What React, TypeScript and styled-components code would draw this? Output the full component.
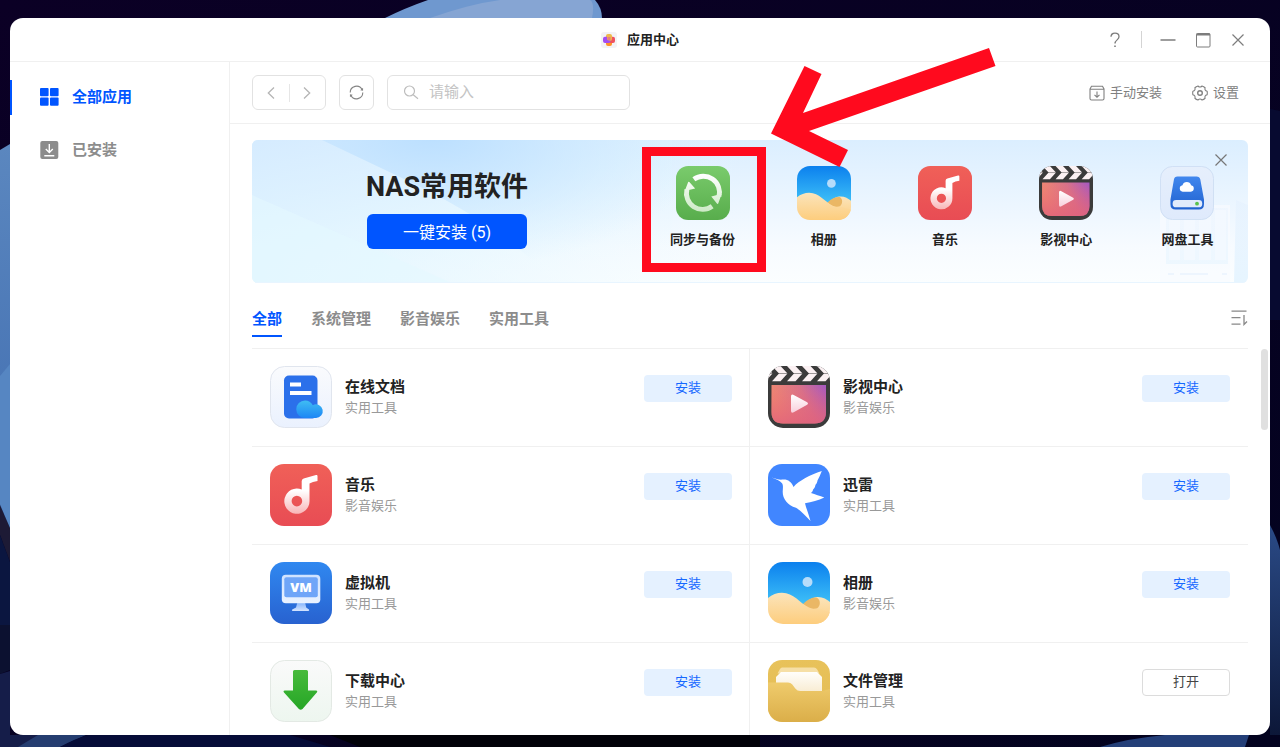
import React, { useId } from "react";
import styled, { createGlobalStyle, css } from "styled-components";

const color = {
  blue: "#0055ff",
  text: "#222222",
  muted: "#8c8c8c",
  line: "#f0f0f0",
  control: "#e2e2e2",
  mark: "#ff0a1e",
};

const GlobalStyle = createGlobalStyle`
  *, *::before, *::after { box-sizing: border-box; }
  body {
    margin: 0;
    background: #070022;
    color: ${color.text};
    font-family: Roboto, "Noto Sans CJK SC", sans-serif;
    font-size: 13px;
  }
  button, input { font: inherit; color: inherit; }
  button { border: 0; padding: 0; background: none; cursor: pointer; }
  svg { display: block; flex: none; }
  h1, h2, h3, p, ul { margin: 0; padding: 0; }
  ul { list-style: none; }
`;

const Desktop = styled.div`
  position: relative;
  height: 100vh;
  padding: 18px 10px 12px;
`;

const WallpaperSvg = styled.svg`
  position: absolute;
  inset: 0;
  width: 100%;
  height: 100%;
`;

const Window = styled.section`
  position: relative;
  display: flex;
  flex-direction: column;
  height: 100%;
  background: #fff;
  border-radius: 13px;
  overflow: hidden;
`;

const TitleBar = styled.header`
  display: grid;
  grid-template-columns: 1fr auto 1fr;
  align-items: center;
  flex: none;
  height: 44px;
  padding: 0 24px;
  border-bottom: 1px solid ${color.line};
`;

const WindowTitle = styled.h1`
  grid-column: 2;
  display: flex;
  align-items: center;
  gap: 10px;
  font-size: 13px;
  line-height: 20px;
`;

const WindowControls = styled.div`
  display: flex;
  align-items: center;
  justify-content: flex-end;
  color: #7d7d7d;
`;

const ControlButton = styled.button`
  display: grid;
  place-items: center;
  width: 16px;
  height: 20px;
  & + & { margin-left: 19px; }
`;

const ControlDivider = styled.span`
  width: 1px;
  height: 17px;
  margin: 0 18px;
  background: #d4d4d4;
`;

const Body = styled.div`
  display: flex;
  flex: 1;
  min-height: 0;
`;

const Sidebar = styled.nav`
  flex: none;
  display: flex;
  flex-direction: column;
  gap: 18px;
  width: 220px;
  padding-top: 18px;
  border-right: 1px solid ${color.line};
`;

const SideLink = styled.a<{ $active?: boolean }>`
  display: flex;
  align-items: center;
  gap: 13px;
  height: 35px;
  padding: 0 0 2px 28px;
  border-left: 2px solid ${(p) => (p.$active ? color.blue : "transparent")};
  color: ${(p) => (p.$active ? color.blue : color.muted)};
  font-size: 15px;
  font-weight: 700;
  line-height: 20px;
  text-decoration: none;
`;

const Main = styled.main`
  flex: 1;
  min-width: 0;
  display: flex;
  flex-direction: column;
`;

const Toolbar = styled.div`
  flex: none;
  display: flex;
  align-items: center;
  gap: 13px;
  height: 62px;
  padding: 0 31px 0 22px;
  border-bottom: 1px solid ${color.line};
`;

const boxed = css`
  height: 35px;
  border: 1px solid ${color.control};
  border-radius: 6px;
`;

const NavGroup = styled.div`
  ${boxed}
  display: flex;
  align-items: center;
  width: 74px;
`;

const NavButton = styled.button`
  flex: 1;
  display: grid;
  place-items: center;
  height: 18px;
  color: #b5b5b5;
  & + & { border-left: 1px solid #e6e6e6; }
`;

const RefreshButton = styled.button`
  ${boxed}
  display: grid;
  place-items: center;
  width: 35px;
  color: #858585;
`;

const SearchBox = styled.label`
  ${boxed}
  display: flex;
  align-items: center;
  gap: 10px;
  width: 243px;
  padding: 0 15px;
  color: #bdbdbd;
`;

const SearchInput = styled.input`
  flex: 1;
  min-width: 0;
  padding: 0 0 2px;
  border: 0;
  outline: 0;
  background: none;
  font-size: 15px;
  color: ${color.text};
  &::placeholder { color: #c4c4c4; }
`;

const ToolbarActions = styled.div`
  display: flex;
  gap: 30px;
  margin-left: auto;
`;

const ActionButton = styled.button`
  display: flex;
  align-items: center;
  gap: 5px;
  color: #808080;
  line-height: 20px;
`;

const Banner = styled.section`
  position: relative;
  flex: none;
  display: flex;
  height: 143px;
  margin: 16px 22px 0;
`;

const BannerArt = styled.svg`
  position: absolute;
  inset: 0;
  width: 100%;
  height: 100%;
  border-radius: 6px;
`;

const BannerLead = styled.div`
  position: relative;
  flex: 0 0 390px;
  display: flex;
  flex-direction: column;
  align-items: center;
  gap: 8px;
  padding-top: 28px;
`;

const BannerTitle = styled.h2`
  font-size: 27px;
  line-height: 38px;
`;

const InstallAllButton = styled.button`
  width: 160px;
  height: 35px;
  padding-bottom: 2px;
  border-radius: 6px;
  background: ${color.blue};
  color: #fff;
  font-size: 16px;
`;

const BannerApps = styled.ul`
  position: relative;
  flex: 1;
  display: grid;
  grid-template-columns: repeat(5, 1fr);
`;

const BannerApp = styled.li`
  position: relative;
  display: flex;
  flex-direction: column;
  align-items: center;
  gap: 10px;
  padding-top: 26px;
  font-weight: 700;
  line-height: 20px;
`;

const BannerClose = styled.button`
  position: absolute;
  top: 12px;
  right: 19px;
  display: grid;
  place-items: center;
  width: 16px;
  height: 16px;
  color: #777;
`;

const MarkFrame = styled.span`
  position: absolute;
  z-index: 2;
  top: 7px;
  left: 0;
  width: 124px;
  height: 125px;
  border: 9px solid ${color.mark};
`;

const MarkArrow = styled.svg`
  position: absolute;
  z-index: 3;
  top: -92px;
  left: 129px;
`;

const TabRow = styled.div`
  flex: none;
  display: flex;
  align-items: center;
  height: 66px;
  margin: 0 22px;
  padding-top: 4px;
  border-bottom: 1px solid ${color.line};
`;

const Tabs = styled.div`
  flex: 1;
  display: flex;
  gap: 29px;
`;

const Tab = styled.button<{ $active?: boolean }>`
  height: 38px;
  padding-top: 4px;
  border-bottom: 2px solid ${(p) => (p.$active ? color.blue : "transparent")};
  color: ${(p) => (p.$active ? color.blue : color.muted)};
  font-size: 15px;
  font-weight: 700;
  line-height: 24px;
`;

const SortButton = styled.button`
  color: #888;
`;

const ListArea = styled.div`
  flex: 1;
  min-height: 0;
  display: flex;
  padding-left: 22px;
`;

const AppGrid = styled.ul`
  flex: 1;
  display: grid;
  grid-template-columns: 1fr 1fr;
  grid-auto-rows: 98px;
  overflow: hidden;
`;

const AppCell = styled.li`
  display: flex;
  align-items: flex-start;
  gap: 13px;
  padding: 17px 18px;
  border-bottom: 1px solid ${color.line};
  &:nth-child(odd) {
    padding-right: 17px;
    border-right: 1px solid ${color.line};
  }
`;

const AppText = styled.div`
  flex: 1;
  padding-top: 10px;
`;

const AppName = styled.h3`
  font-size: 15px;
  line-height: 22px;
`;

const AppKind = styled.p`
  color: #999;
  font-size: 13px;
  line-height: 20px;
`;

const AppButton = styled.button<{ $open?: boolean }>`
  width: 88px;
  height: 27px;
  margin-top: 9px;
  padding-bottom: 2px;
  border-radius: 4px;
  line-height: 20px;
  ${(p) =>
    p.$open
      ? css`
          border: 1px solid #dcdcdc;
          background: #fff;
          color: #444;
        `
      : css`
          background: #e5f1ff;
          color: #1668ff;
        `}
`;

const ScrollTrack = styled.div`
  flex: none;
  display: flex;
  justify-content: flex-end;
  width: 22px;
  padding-right: 2px;
`;

const ScrollThumb = styled.div`
  width: 7px;
  height: 81px;
  border-radius: 4px;
  background: #e0e0e0;
`;

type AppId = "docs" | "movie" | "music" | "xunlei" | "vm" | "photos" | "download" | "files" | "sync" | "drive";

function AppIcon({ id, size }: { id: AppId; size: number }) {
  const uid = useId().replace(/[^a-zA-Z0-9]/g, "");
  const g = (n: string) => `${n}${uid}`;
  const url = (n: string) => `url(#${g(n)})`;
  const grad = (n: string, a: string, b: string) => (
    <linearGradient id={g(n)} x1="0" y1="0" x2="0" y2="1">
      <stop offset="0" stopColor={a} />
      <stop offset="1" stopColor={b} />
    </linearGradient>
  );
  const clip = (
    <clipPath id={g("c")}>
      <rect width="62" height="62" rx="15" />
    </clipPath>
  );
  const tile = <rect width="62" height="62" rx="14" fill={url("a")} />;
  const paleTile = (stroke: string) => (
    <rect x="0.5" y="0.5" width="61" height="61" rx="14" fill={url("a")} stroke={stroke} />
  );

  const art: Record<AppId, React.ReactNode> = {
    docs: (
      <>
        <defs>
          {grad("a", "#fafbfd", "#eaf1fe")}
          {grad("b", "#3fbdf3", "#1d86f5")}
        </defs>
        {paleTile("#e0e5ee")}
        <rect x="14" y="9.500" width="33.500" height="43" rx="5" fill="#2b70ea" />
        <path d="M20 16.500h11v4H20zM20 25h21.500v4H20z" fill="#fff" />
        <path d="M35 34.500a8.800 8.800 0 0 1 7.800 4.700A6.800 6.800 0 1 1 45.600 52H35A8.750 8.750 0 0 1 35 34.500z" fill={url("b")} />
      </>
    ),
    movie: (
      <>
        <defs>
          {clip}
          <linearGradient id={g("a")} x1="0" y1="0.3" x2="1" y2="0">
            <stop offset="0" stopColor="#f08a70" />
            <stop offset="0.55" stopColor="#d8728a" />
            <stop offset="1" stopColor="#a358c4" />
          </linearGradient>
          {grad("b", "#e8607800", "#e0607c")}
          {grad("w", "#ffffff", "#f9cfdc")}
        </defs>
        <g clipPath={url("c")}>
          <rect width="62" height="62" fill="#3b3b3b" />
          {[-11, 4, 19, 34, 49].map((x) => (
            <path key={x} d={`M${x} 0h8.500l7 7.500-7 7.800h-8.500l7-7.800z`} fill="#fbf1f3" />
          ))}
          <path d="M0 7.500h62" stroke="#3b3b3b" strokeWidth="0.5" />
        </g>
        <path d="M3.500 19h54.500v27q0 11.500-11.500 11.500H15Q3.500 57.500 3.500 46z" fill={url("a")} />
        <path d="M3.500 19h54.500v27q0 11.500-11.500 11.500H15Q3.500 57.500 3.500 46z" fill={url("b")} opacity="0.8" />
        <path d="M23 30.500q0-3 2.700-1.600l13 7.200q2.600 1.400 0 2.900l-13 7.300q-2.700 1.300-2.700-1.600z" fill={url("w")} />
      </>
    ),
    music: (
      <>
        <defs>
          {grad("a", "#f06058", "#e84c54")}
          <linearGradient id={g("w")} gradientUnits="userSpaceOnUse" x1="0" y1="11" x2="0" y2="50">
            <stop offset="0" stopColor="#fff" />
            <stop offset="0.4" stopColor="#fff" />
            <stop offset="1" stopColor="#f8b4b6" />
          </linearGradient>
        </defs>
        {tile}
        <path
          fillRule="evenodd"
          fill={url("w")}
          d="M46 11q1.500-.3 1.500 1v5q-5 .6-8 2.500V37A12.600 12.600 0 1 1 31.700 25.500V17q0-2 2-2.600zM26.900 31.800a5.300 5.300 0 1 0 0 10.600 5.300 5.300 0 0 0 0-10.600z"
        />
      </>
    ),
    xunlei: (
      <>
        <rect width="62" height="62" rx="14" fill="#4186ff" />
        <path
          fill="#fff"
          d="M3.700 13.600C8 15 11 15.900 14.500 15.600c5-.6 9 2 11 7.400C31 16.500 42 11 53.800 7c-1.300 3.500-3 7-4.300 9.500-.2 2-1 3.300-2 4.300-.4 2-1 3.500-2.400 4.700-.2 1.500-1 2.700-2.100 3.500 4 1.400 9 3 13.300 4.500-6 2.800-12.500 4.800-19.300 5.700 1.500 6 4 12 5.500 17.800C37.500 52 33 46.800 28 43.800 19.500 41 14.600 35 14.700 27.500c.1-3.500.8-6-.7-8.300-2-2.300-6-4-10.300-5.600z"
        />
      </>
    ),
    vm: (
      <>
        <defs>
          {grad("a", "#3088f0", "#2862d0")}
          {grad("w", "#cfe2ff", "#eaf2ff")}
          {grad("s", "#7fb0fb", "#d5e4ff")}
        </defs>
        {tile}
        <path d="M27.500 40h7.500l1.200 5.500 2.800 2q.8 1.500-1 1.500H23q-1.800 0-.8-1.500l3.800-2z" fill={url("s")} />
        <rect x="11.800" y="12.800" width="38.500" height="28.500" rx="4" fill={url("w")} />
        <rect x="14.300" y="15.300" width="33.500" height="20" rx="2" fill="#6fa5f8" />
        <text x="31" y="30" textAnchor="middle" fontFamily="'Open Sans', sans-serif" fontWeight="800" fontSize="13" fill="#fff">
          VM
        </text>
      </>
    ),
    photos: (
      <>
        <defs>
          {clip}
          {grad("a", "#0b80ee", "#43c6f8")}
          {grad("b", "#fbe4bb", "#fdcd7d")}
        </defs>
        <g clipPath={url("c")}>
          <rect width="62" height="46" fill={url("a")} />
          <circle cx="39.500" cy="20" r="5" fill="#b6dcfa" />
          <path d="M35 43C41 37 46 35 50 35c5 0 9 2.500 12 5v22H30z" fill={url("b")} />
          <path d="M35 42c5-5 10-6.800 14-6.300 3.500 2 4 7.500 0 10.800-5 1.500-10-.5-14-4.500z" fill="#eab765" />
          <path d="M0 36c4-3.500 9-5.300 14-5.300 12 0 17 10 27 14.800 3 1.500 6 1.500 8.500 1L62 50v12H0z" fill={url("b")} />
        </g>
      </>
    ),
    download: (
      <>
        <defs>
          {grad("a", "#fafafa", "#edf6ef")}
          {grad("b", "#48bb3c", "#26a626")}
        </defs>
        {paleTile("#e3e9e4")}
        <path
          d="M24.500 10h12q1.500 0 1.500 1.500v19h8q2 .2.800 2L32.500 49q-1.800 1.600-3.600 0L14 32.500q-1.200-1.800.8-2H23v-19q0-1.500 1.500-1.500z"
          fill={url("b")}
        />
      </>
    ),
    files: (
      <>
        <defs>
          {clip}
          {grad("a", "#e8c25a", "#e3bb55")}
          {grad("b", "#fffefb", "#f8ebd0")}
          {grad("f", "#efcb6c", "#dbae49")}
        </defs>
        {tile}
        <path d="M14 7.500h32q2 0 3 1.700l2.500 4.300H9.500L12 9q.8-1.500 2-1.500z" fill="#f6dfa6" />
        <path d="M13 12h36l5 5v16H8V17z" fill={url("b")} />
        <g clipPath={url("c")}>
          <path d="M0 22.500h20q2.500 0 4.300 2l3 4q2 2.500 5 2.500H54l8-2v33H0z" fill={url("f")} />
        </g>
      </>
    ),
    sync: (
      <>
        <defs>
          {grad("a", "#7acb6c", "#58ad4c")}
          <linearGradient id={g("w")} gradientUnits="userSpaceOnUse" x1="0" y1="10" x2="0" y2="52">
            <stop offset="0" stopColor="#fff" />
            <stop offset="1" stopColor="#cdeac6" />
          </linearGradient>
        </defs>
        {tile}
        <g fill="none" stroke={url("w")} strokeWidth="5.600">
          <path d="M20.500 15.300A18.500 18.500 0 0 1 49.300 35" />
          <path d="M41.500 46.200A18.500 18.500 0 0 1 12.500 27" />
        </g>
        <path d="M14 18.500q.6-.8 1.300 0l6.700 7.300-12 3zM40.500 35l12-3-4 11q-.6 1-1.300.2z" fill={url("w")} />
      </>
    ),
    drive: (
      <>
        <defs>
          {grad("a", "#e6effc", "#dfeafc")}
          {grad("b", "#4187ee", "#2162cf")}
        </defs>
        {paleTile("#ccdcf2")}
        <path d="M20 12h22q3.500 0 4.300 3.500l4.200 23V44q0 6-6 6H18q-6 0-6-6v-5.500l4-23Q16.500 12 20 12z" fill={url("b")} />
        <rect x="14.500" y="39" width="34" height="8.500" rx="4" fill="#e1ebfb" />
        <circle cx="42.500" cy="43.200" r="2.200" fill="#5bc24c" />
        <path d="M26 29.500a3.800 3.800 0 0 1-.2-7.500 5.200 5.200 0 0 1 9.900 0 3.800 3.800 0 0 1-.2 7.500z" fill="#fff" />
      </>
    ),
  };

  return (
    <svg width={size} height={size} viewBox="0 0 62 62" aria-hidden="true">
      {art[id]}
    </svg>
  );
}

function Wallpaper() {
  return (
    <WallpaperSvg viewBox="0 0 1280 747" preserveAspectRatio="none" aria-hidden="true">
      <defs>
        <linearGradient id="wpBase" x1="0" y1="0" x2="1" y2="1">
          <stop offset="0" stopColor="#0b0025" />
          <stop offset="1" stopColor="#03031f" />
        </linearGradient>
        <linearGradient id="wpLeft" x1="0" y1="0" x2="0" y2="1">
          <stop offset="0" stopColor="#5b87bf" />
          <stop offset="1" stopColor="#3f6cb0" />
        </linearGradient>
        <linearGradient id="wpRight" x1="0" y1="0" x2="0" y2="1">
          <stop offset="0" stopColor="#2a4a86" />
          <stop offset="1" stopColor="#0c1738" />
        </linearGradient>
      </defs>
      <rect width="1280" height="747" fill="url(#wpBase)" />
      <path d="M385 18Q405 8 428 0H595Q602 8 602 18z" fill="#6f98cf" />
      <path d="M430 18Q470 4 500 0H590Q595 3 592 18z" fill="#86a5d3" />
      <path d="M0 150L10 144V530L0 510z" fill="url(#wpLeft)" />
      <path d="M0 376L10 364V528L0 504z" fill="#5686c2" />
      <path d="M0 505L10 528V562L0 535z" fill="#1d1a35" />
      <path d="M0 535L10 562V625H0z" fill="#0b1640" />
      <path d="M0 625H10V670L0 674z" fill="#0c1130" />
      <path d="M0 674L10 671V735L60 735V747H0z" fill="#151d49" />
      <path d="M18 747L38 735H86L60 747z" fill="#253d70" />
      <path d="M60 747Q74 739 88 735H290L330 747z" fill="#060c38" />
      <path d="M330 735H760V747H360z" fill="#010108" />
      <path d="M1100 747Q1130 738 1165 735H1249L1245 747z" fill="#243f78" />
      <path d="M1270 109L1280 111V320H1270z" fill="#070a30" />
      <path d="M1270 525Q1277 538 1280 550V735H1270z" fill="url(#wpRight)" />
    </WallpaperSvg>
  );
}

function AppCenterLogo() {
  return (
    <svg width="16" height="16" viewBox="0 0 16 16" aria-hidden="true">
      <rect width="16" height="16" rx="3" fill="#f3f3f5" />
      <rect x="5" y="7" width="6" height="7" rx="2" fill="#ff9226" />
      <rect x="8" y="4.700" width="6" height="6.300" rx="2" fill="#f0525e" />
      <rect x="5" y="2" width="6" height="7" rx="2" fill="#efb84a" />
      <path d="M4 4.700h2v1.800a2 2 0 0 0 2 2h1.500v.5a2 2 0 0 1-2 2H4a2 2 0 0 1-2-2V6.700a2 2 0 0 1 2-2z" fill="#a24cf2" />
      <path d="M6.500 5h3v3h-1.500a1.500 1.500 0 0 1-1.500-1.500z" fill="#e57d7f" />
    </svg>
  );
}

const CloseGlyph = () => (
  <svg width="12" height="12" viewBox="0 0 12 12" stroke="currentColor" strokeWidth="1.2" aria-hidden="true">
    <path d="M.5.5l11 11M11.500.5l-11 11" />
  </svg>
);

const apps: { id: AppId; name: string; kind: string; open?: boolean }[] = [
  { id: "docs", name: "在线文档", kind: "实用工具" },
  { id: "movie", name: "影视中心", kind: "影音娱乐" },
  { id: "music", name: "音乐", kind: "影音娱乐" },
  { id: "xunlei", name: "迅雷", kind: "实用工具" },
  { id: "vm", name: "虚拟机", kind: "实用工具" },
  { id: "photos", name: "相册", kind: "影音娱乐" },
  { id: "download", name: "下载中心", kind: "实用工具" },
  { id: "files", name: "文件管理", kind: "实用工具", open: true },
];

const featured: { id: AppId; name: string; marked?: boolean }[] = [
  { id: "sync", name: "同步与备份", marked: true },
  { id: "photos", name: "相册" },
  { id: "music", name: "音乐" },
  { id: "movie", name: "影视中心" },
  { id: "drive", name: "网盘工具" },
];

const tabs = ["全部", "系统管理", "影音娱乐", "实用工具"];

export default function App() {
  return (
    <>
      <GlobalStyle />
      <Desktop>
        <Wallpaper />
        <Window>
          <TitleBar>
            <WindowTitle>
              <AppCenterLogo />
              应用中心
            </WindowTitle>
            <WindowControls>
              <ControlButton aria-label="帮助">
                <svg width="12" height="16" viewBox="0 0 12 16" fill="none" stroke="currentColor" strokeWidth="1.3" aria-hidden="true">
                  <path d="M2 4.800C2 2.500 3.700 1.200 6 1.200s4 1.300 4 3.500C10 8 6 7.800 6 11.600" />
                  <path d="M6 13.400v1.600" strokeWidth="1.600" />
                </svg>
              </ControlButton>
              <ControlDivider />
              <ControlButton aria-label="最小化">
                <svg width="16" height="16" viewBox="0 0 16 16" stroke="currentColor" strokeWidth="1.3" aria-hidden="true">
                  <path d="M.5 8h15" />
                </svg>
              </ControlButton>
              <ControlButton aria-label="最大化">
                <svg width="16" height="16" viewBox="0 0 16 16" fill="none" stroke="currentColor" aria-hidden="true">
                  <rect x="1.500" y="1.500" width="13.500" height="13.500" rx="1" />
                  <path d="M1.500 2.500h13.500" strokeWidth="2" />
                </svg>
              </ControlButton>
              <ControlButton aria-label="关闭">
                <CloseGlyph />
              </ControlButton>
            </WindowControls>
          </TitleBar>

          <Body>
            <Sidebar aria-label="应用">
              <SideLink href="#all" $active>
                <svg width="19" height="18" viewBox="0 0 19 18" fill="currentColor" aria-hidden="true">
                  <rect x="0" y="0" width="8.600" height="8.200" rx="1" />
                  <rect x="10" y="0" width="8.600" height="8.200" rx="1" />
                  <rect x="0" y="9.600" width="8.600" height="8.200" rx="1" />
                  <rect x="10" y="9.600" width="8.600" height="8.200" rx="1" />
                </svg>
                全部应用
              </SideLink>
              <SideLink href="#installed">
                <svg width="19" height="18" viewBox="0 0 19 18" aria-hidden="true">
                  <rect x="0.300" width="18" height="18" rx="2" fill="currentColor" />
                  <path d="M9.300 3v8M5.800 8l3.500 3.500L12.800 8M4.300 14.700h10" fill="none" stroke="#fff" strokeWidth="1.400" />
                </svg>
                已安装
              </SideLink>
            </Sidebar>

            <Main>
              <Toolbar>
                <NavGroup>
                  <NavButton aria-label="后退">
                    <svg width="8" height="12" viewBox="0 0 8 12" fill="none" stroke="currentColor" strokeWidth="1.300" aria-hidden="true">
                      <path d="M7 .5L1.300 6 7 11.500" />
                    </svg>
                  </NavButton>
                  <NavButton aria-label="前进">
                    <svg width="8" height="12" viewBox="0 0 8 12" fill="none" stroke="currentColor" strokeWidth="1.300" aria-hidden="true">
                      <path d="M1 .5L6.700 6 1 11.500" />
                    </svg>
                  </NavButton>
                </NavGroup>
                <RefreshButton aria-label="刷新">
                  <svg width="15" height="15" viewBox="0 0 16 16" fill="none" stroke="currentColor" strokeWidth="1.200" aria-hidden="true">
                    <path d="M1.300 8A6.700 6.700 0 0 1 14 5M14.700 8A6.700 6.700 0 0 1 2 11" />
                    <path d="M15 3v3.200l-3-.6zM1 13V9.800l3 .6z" fill="currentColor" stroke="none" />
                  </svg>
                </RefreshButton>
                <SearchBox>
                  <svg width="16" height="16" viewBox="0 0 16 16" fill="none" stroke="currentColor" strokeWidth="1.200" aria-hidden="true">
                    <circle cx="6.500" cy="6" r="5" />
                    <path d="M10.200 9.800l4.800 4" />
                  </svg>
                  <SearchInput type="text" placeholder="请输入" aria-label="搜索" />
                </SearchBox>
                <ToolbarActions>
                  <ActionButton>
                    <svg width="16" height="16" viewBox="0 0 16 16" fill="none" stroke="currentColor" strokeWidth="1.100" aria-hidden="true">
                      <path d="M1 4l1.500-2.800h11L15 4v9.500q0 1.500-1.500 1.500h-11Q1 15 1 13.500zM1 4.200h14M8 6.500v5.500M5.500 9.800L8 12.200l2.500-2.400" />
                    </svg>
                    手动安装
                  </ActionButton>
                  <ActionButton>
                    <svg width="16" height="16" viewBox="0 0 16 16" fill="none" stroke="currentColor" strokeWidth="1.100" aria-hidden="true">
                      <path d="M15.100 6.200Q15.500 8 15.100 9.800 12.300 10.500 13.100 13.250 11.800 14.500 10 15 8 13 6 15 4.200 14.500 2.900 13.250 3.700 10.500.9 9.800.5 8 .9 6.200 3.700 5.500 2.900 2.750 4.200 1.500 6 1 8 3 10 1 11.800 1.500 13.100 2.750 12.300 5.500 15.100 6.200z" strokeLinejoin="round" />
                      <circle cx="8" cy="8" r="2.300" strokeWidth="1.400" />
                    </svg>
                    设置
                  </ActionButton>
                </ToolbarActions>
              </Toolbar>

              <Banner>
                <BannerArt viewBox="0 0 996 143" preserveAspectRatio="none" aria-hidden="true">
                  <defs>
                    <linearGradient id="bnBase" x1="0" y1="0" x2="0" y2="1">
                      <stop offset="0" stopColor="#dbeeff" />
                      <stop offset="0.75" stopColor="#f7fbff" />
                      <stop offset="1" stopColor="#fbfeff" />
                    </linearGradient>
                    <linearGradient id="bnLeft" x1="0" y1="0" x2="0.6" y2="1">
                      <stop offset="0" stopColor="#d2e8ff" />
                      <stop offset="0.5" stopColor="#e0f3ff" />
                      <stop offset="1" stopColor="#eefbff" stopOpacity="0" />
                    </linearGradient>
                    <radialGradient id="bnGlow" gradientUnits="userSpaceOnUse" cx="0" cy="0" r="1" gradientTransform="translate(180 -5) scale(280 135)">
                      <stop offset="0" stopColor="#bbdfff" />
                      <stop offset="1" stopColor="#c9e7ff" stopOpacity="0" />
                    </radialGradient>
                    <linearGradient id="bnLow" x1="0" y1="0" x2="1" y2="0">
                      <stop offset="0" stopColor="#def4ff" />
                      <stop offset="1" stopColor="#eaf9ff" stopOpacity="0" />
                    </linearGradient>
                    <linearGradient id="bnCase" x1="0" y1="0" x2="0" y2="1">
                      <stop offset="0" stopColor="#e3f0fe" stopOpacity="0.5" />
                      <stop offset="1" stopColor="#e6f5ff" />
                    </linearGradient>
                  </defs>
                  <rect width="996" height="143" fill="url(#bnBase)" />
                  <rect width="500" height="143" fill="url(#bnLow)" />
                  <rect width="420" height="143" fill="url(#bnLeft)" opacity="0.7" />
                  <path d="M70 0H470V143H300Q260 90 150 38z" fill="url(#bnGlow)" />
                  <path d="M0 55L200 143H0z" fill="#e4f9ff" opacity="0.6" />
                  <path d="M908 65h70v78h-70z" fill="#f8fbff" opacity="0.7" />
                  <path d="M984 60l12 5v78h-14z" fill="url(#bnCase)" />
                  <path d="M914 68h62v56h-62z" fill="url(#bnCase)" opacity="0.6" />
                  <path d="M917 70h11v50h-11zM932 70h11v50h-11zM947 70h12v50h-12zM963 70h11v50h-11z" fill="#f4f9ff" opacity="0.8" />
                  <path d="M916 134h6M928 134h28M970 134h5" stroke="#edf5fe" strokeWidth="2" />
                  <path d="M0 142.500h996" stroke="#e8f5ff" />
                </BannerArt>
                <BannerLead>
                  <BannerTitle>NAS常用软件</BannerTitle>
                  <InstallAllButton>一键安装 (5)</InstallAllButton>
                </BannerLead>
                <BannerApps>
                  {featured.map((app) => (
                    <BannerApp key={app.id}>
                      <AppIcon id={app.id} size={54} />
                      {app.name}
                      {app.marked && (
                        <>
                          <MarkFrame />
                          <MarkArrow width="226" height="120" viewBox="771 48 226 120" aria-hidden="true">
                            <path d="M989 48l6.500 18L809 131l39 19-8.500 17L771 133.500 804.500 66l17 8L803 113z" fill={color.mark} />
                          </MarkArrow>
                        </>
                      )}
                    </BannerApp>
                  ))}
                </BannerApps>
                <BannerClose aria-label="关闭推荐">
                  <CloseGlyph />
                </BannerClose>
              </Banner>

              <TabRow>
                <Tabs role="tablist">
                  {tabs.map((tab, i) => (
                    <Tab key={tab} role="tab" aria-selected={i === 0} $active={i === 0}>
                      {tab}
                    </Tab>
                  ))}
                </Tabs>
                <SortButton aria-label="排序">
                  <svg width="17" height="16" viewBox="0 0 17 16" fill="none" stroke="currentColor" strokeWidth="1.300" aria-hidden="true">
                    <path d="M.5 1.200h15M.5 7.700h9M.5 14.200h9M13 5v9.500l3-3" />
                  </svg>
                </SortButton>
              </TabRow>

              <ListArea>
                <AppGrid>
                  {apps.map((app) => (
                    <AppCell key={app.id}>
                      <AppIcon id={app.id} size={62} />
                      <AppText>
                        <AppName>{app.name}</AppName>
                        <AppKind>{app.kind}</AppKind>
                      </AppText>
                      <AppButton $open={app.open}>{app.open ? "打开" : "安装"}</AppButton>
                    </AppCell>
                  ))}
                </AppGrid>
                <ScrollTrack>
                  <ScrollThumb />
                </ScrollTrack>
              </ListArea>
            </Main>
          </Body>
        </Window>
      </Desktop>
    </>
  );
}
